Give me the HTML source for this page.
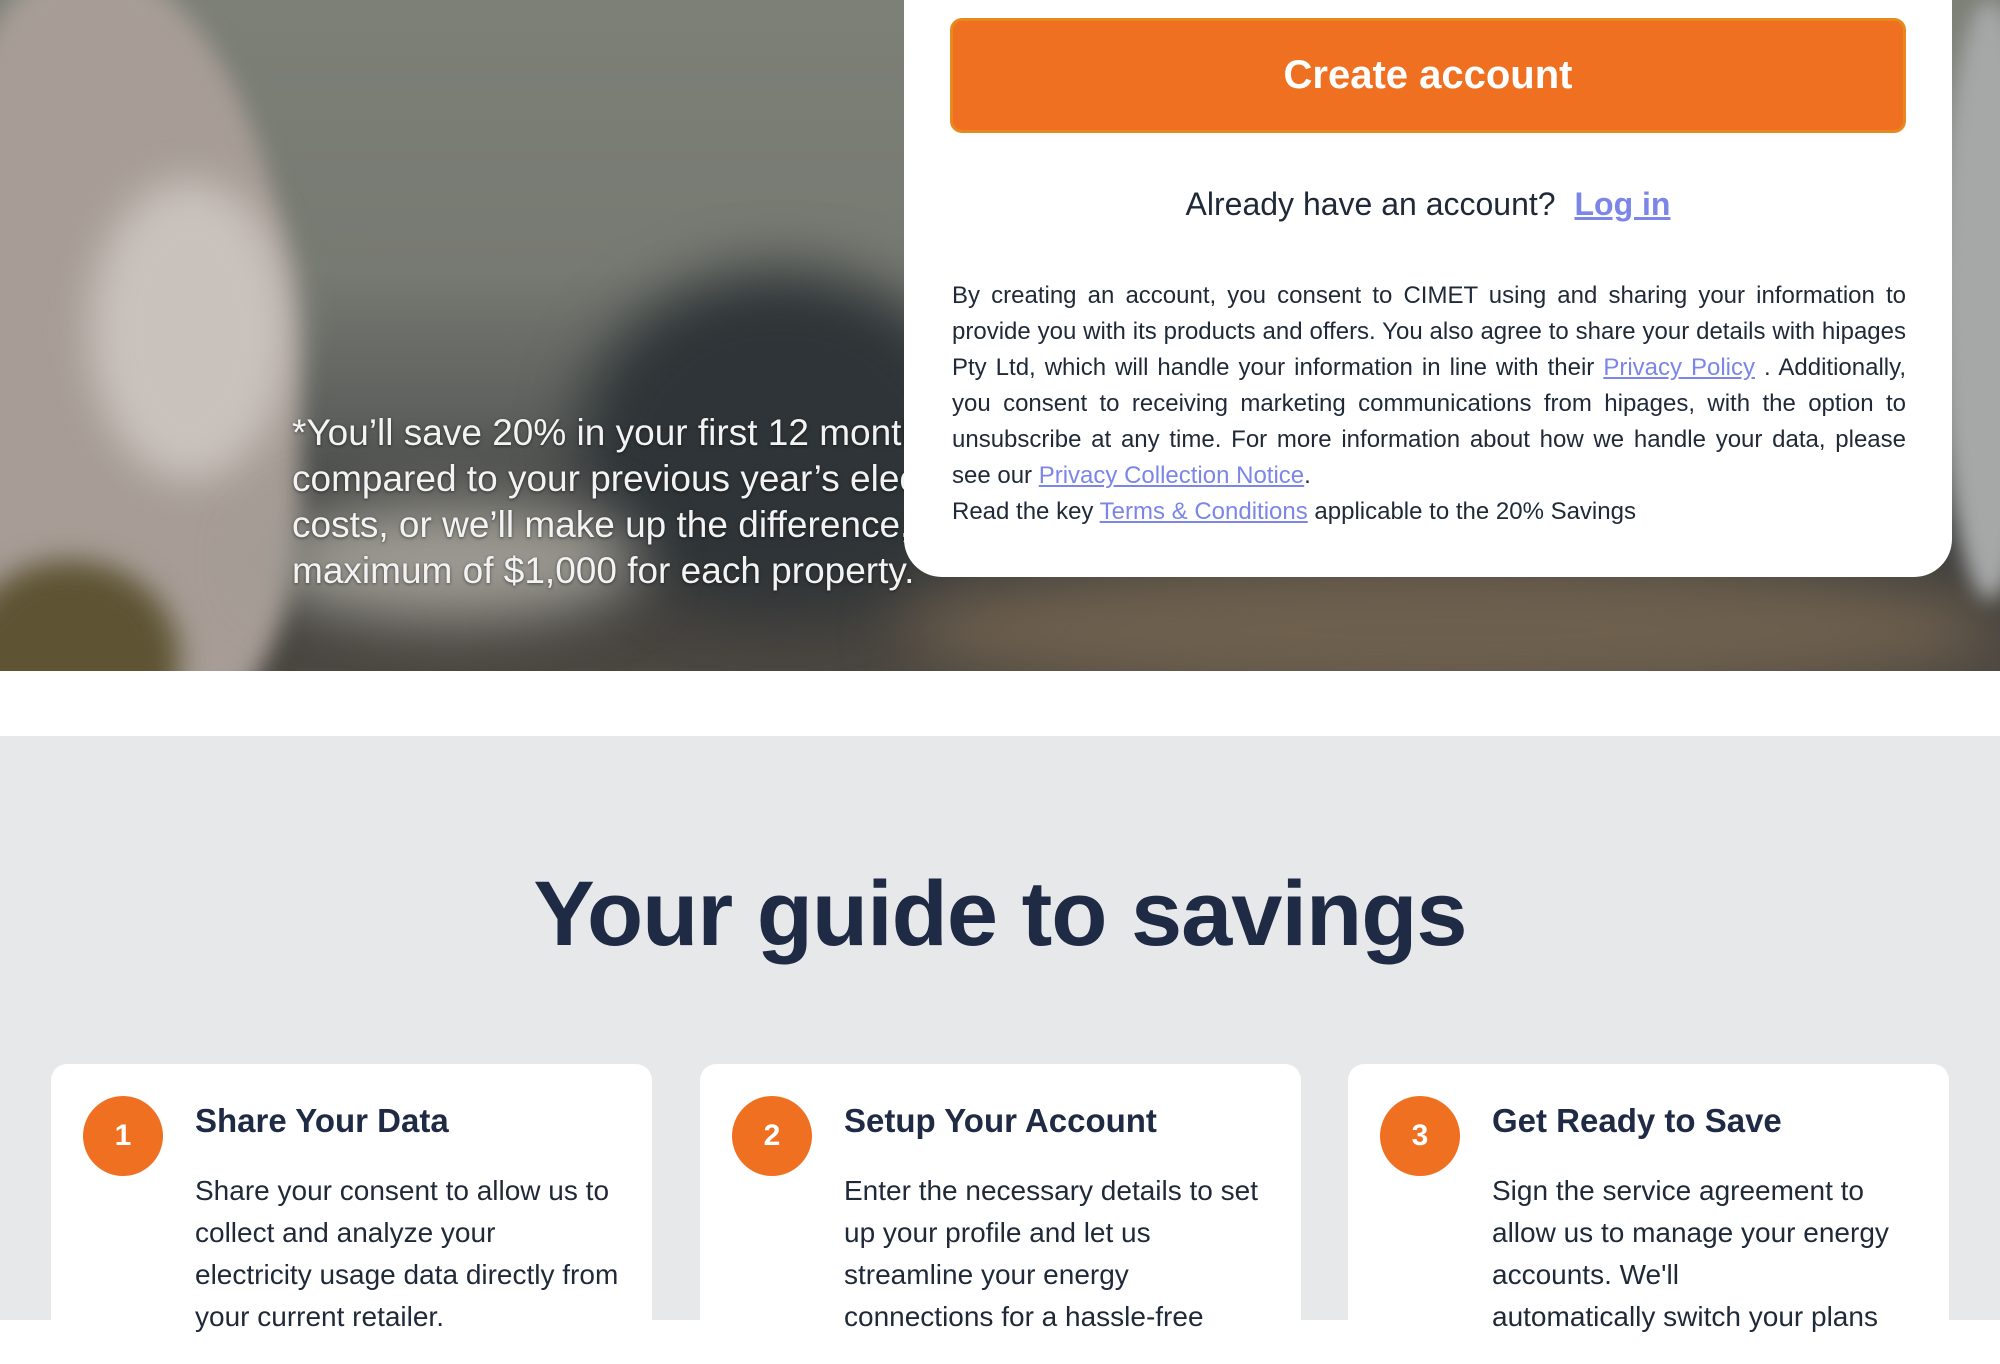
<!DOCTYPE html>
<html><head><meta charset="utf-8"><style>
*{margin:0;padding:0;box-sizing:border-box}
body{width:2000px;height:1320px;overflow:hidden;font-family:"Liberation Sans",Arial,sans-serif;background:#fff;position:relative}
.hero{position:absolute;left:0;top:0;width:2000px;height:671px;overflow:hidden;
background:linear-gradient(180deg,#7d8077 0%,#777a72 40%,#5d605c 62%,#3c3d3c 78%,#4a4640 100%)}
.blob{position:absolute;border-radius:50%;filter:blur(30px)}
.herotext{position:absolute;left:292px;top:410px;color:#f3f3f3;font-size:37px;line-height:46px;text-shadow:0 1px 3px rgba(0,0,0,.5);white-space:nowrap}
.card{position:absolute;left:904px;top:-40px;width:1048px;height:617px;background:#fff;border-radius:38px;z-index:2}
.btn{position:absolute;left:46px;top:58px;width:956px;height:115px;background:#f07022;border:3px solid #e8891f;border-radius:12px;color:#fff;font-weight:bold;font-size:40px;text-align:center;line-height:109px}
.already{position:absolute;left:0;width:100%;top:226px;text-align:center;font-size:32px;color:#1f2937}
.already a{color:#7b86e8;font-weight:bold;margin-left:10px}
.legal{position:absolute;left:48px;top:318px;width:954px;font-size:24px;line-height:36px;color:#1f2937}
.legal span{display:block;text-align:justify;text-align-last:justify;white-space:nowrap}
.legal span.l{text-align-last:left}
a{color:#7b86e8;text-decoration:underline}
.gray{position:absolute;left:0;top:736px;width:2000px;height:584px;background:#e7e8ea}
h1{position:absolute;top:862px;left:0;width:2000px;text-align:center;font-size:92px;color:#1f2a44;font-weight:bold;letter-spacing:-1px}
.step{position:absolute;top:1064px;width:601px;height:300px;background:#fff;border-radius:16px}
.num{position:absolute;left:32px;top:32px;width:80px;height:80px;border-radius:50%;background:#f07022;color:#fff;font-weight:bold;font-size:30px;text-align:center;line-height:80px}
.st{position:absolute;left:144px;top:38px;font-size:33px;font-weight:bold;color:#1f2a44}
.sb{position:absolute;left:144px;top:106px;width:440px;font-size:28px;line-height:42px;color:#1f2937;white-space:nowrap}
</style></head><body>
<div class="hero">
 <div class="blob" style="left:-60px;top:-40px;width:360px;height:760px;background:#a79d96;filter:blur(12px);border-radius:40% 60% 30% 30%"></div>
 <div class="blob" style="left:90px;top:180px;width:200px;height:300px;background:#c9c2bc;filter:blur(20px)"></div>
 <div class="blob" style="left:-40px;top:560px;width:220px;height:200px;background:#5e5434;filter:blur(14px)"></div>
 <div class="blob" style="left:580px;top:270px;width:400px;height:340px;background:#2e3437;filter:blur(30px)"></div>
 <div class="blob" style="left:260px;top:500px;width:380px;height:120px;background:#9c9a92;filter:blur(30px)"></div>
 <div class="blob" style="left:900px;top:560px;width:1100px;height:140px;background:#6e604e;filter:blur(30px)"></div>
 <div class="blob" style="left:1940px;top:0;width:100px;height:600px;background:#a6a8a8;filter:blur(10px)"></div>
 <div class="herotext">*You’ll save 20% in your first 12 months<br>compared to your previous year’s electricity<br>costs, or we’ll make up the difference, up to a<br>maximum of $1,000 for each property.</div>
</div>
<div class="card">
 <div class="btn">Create account</div>
 <div class="already">Already have an account? <a>Log in</a></div>
 <div class="legal">
  <span>By creating an account, you consent to CIMET using and sharing your information to</span>
  <span>provide you with its products and offers. You also agree to share your details with hipages</span>
  <span>Pty Ltd, which will handle your information in line with their <a>Privacy Policy</a> . Additionally,</span>
  <span>you consent to receiving marketing communications from hipages, with the option to</span>
  <span>unsubscribe at any time. For more information about how we handle your data, please</span>
  <span class="l">see our <a>Privacy Collection Notice</a>.</span>
  <span class="l">Read the key <a>Terms &amp; Conditions</a> applicable to the 20% Savings</span>
 </div>
</div>
<div class="gray">
</div>
<h1>Your guide to savings</h1>
<div class="step" style="left:51px"><div class="num">1</div><div class="st">Share Your Data</div><div class="sb">Share your consent to allow us to<br>collect and analyze your<br>electricity usage data directly from<br>your current retailer.</div></div>
<div class="step" style="left:700px"><div class="num">2</div><div class="st">Setup Your Account</div><div class="sb">Enter the necessary details to set<br>up your profile and let us<br>streamline your energy<br>connections for a hassle-free</div></div>
<div class="step" style="left:1348px"><div class="num">3</div><div class="st">Get Ready to Save</div><div class="sb">Sign the service agreement to<br>allow us to manage your energy<br>accounts. We'll<br>automatically switch your plans</div></div>
</body></html>
